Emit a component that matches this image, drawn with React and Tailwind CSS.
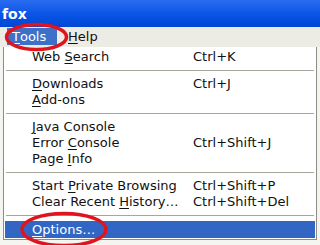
import React from "react";

const U = ({ children }) => <span className="underline underline-offset-[2px] decoration-1">{children}</span>;

function Item({ label, shortcut, active }) {
  return (
    <div
      className={`flex items-center h-4 ${active ? "bg-[#3266c4] text-white" : "text-[#111]"}`}
    >
      <div className="pl-[28px] w-[189px] whitespace-nowrap">{label}</div>
      <div className="whitespace-nowrap">{shortcut}</div>
    </div>
  );
}

function Sep() {
  return (
    <div className="h-[11px] flex items-center px-[2px]">
      <div className="h-px w-full bg-[#a8a69c]" />
    </div>
  );
}

export default function App() {
  return (
    <div
      className="relative w-[320px] h-[245px] bg-[#f4f4f0] overflow-hidden text-[13px] leading-4"
      style={{ fontFamily: '"DejaVu Sans", Verdana, sans-serif' }}
    >
      <div className="h-[27px] bg-gradient-to-b from-[#2a6cf0] via-[#0a56e6] to-[#0046d6] flex items-center">
        <span className="pl-[2px] text-white font-bold text-[14px]">fox</span>
      </div>
      <div className="h-[20px] bg-[#ecebe4] flex items-start pt-[1px]">
        <div className="ml-[7px] w-[50px] h-[17px] bg-[#3d71c9] text-white flex items-center pl-[5px]">
          <U>T</U>ools
        </div>
        <div className="ml-[11px] h-[17px] flex items-center text-[#111]">
          <U>H</U>elp
        </div>
      </div>
      <div className="ml-[3px] w-[314px] bg-white border-l border-r border-b border-[#8f8c84] pt-[2px] pb-[1px]">
        <Item label={<>Web <U>S</U>earch</>} shortcut="Ctrl+K" />
        <Sep />
        <Item label={<><U>D</U>ownloads</>} shortcut="Ctrl+J" />
        <Item label={<><U>A</U>dd-ons</>} />
        <Sep />
        <Item label={<><U>J</U>ava Console</>} />
        <Item label={<>Error <U>C</U>onsole</>} shortcut="Ctrl+Shift+J" />
        <Item label={<>Page <U>I</U>nfo</>} />
        <Sep />
        <Item label={<>Start <U>P</U>rivate Browsing</>} shortcut="Ctrl+Shift+P" />
        <Item label={<>Clear Recent <U>H</U>istory…</>} shortcut="Ctrl+Shift+Del" />
        <Sep />
        <div className="h-[17px] bg-[#3266c4] text-white flex items-center mx-[1px]">
          <div className="pl-[27px] whitespace-nowrap"><U>O</U>ptions…</div>
        </div>
      </div>
      <svg className="absolute inset-0 pointer-events-none" width="320" height="245">
        <ellipse cx="36.5" cy="37" rx="30" ry="12.5" fill="none" stroke="#e0141c" strokeWidth="3.5" />
        <ellipse cx="64" cy="229.5" rx="42" ry="16" fill="none" stroke="#e0141c" strokeWidth="3.5" />
      </svg>
    </div>
  );
}
